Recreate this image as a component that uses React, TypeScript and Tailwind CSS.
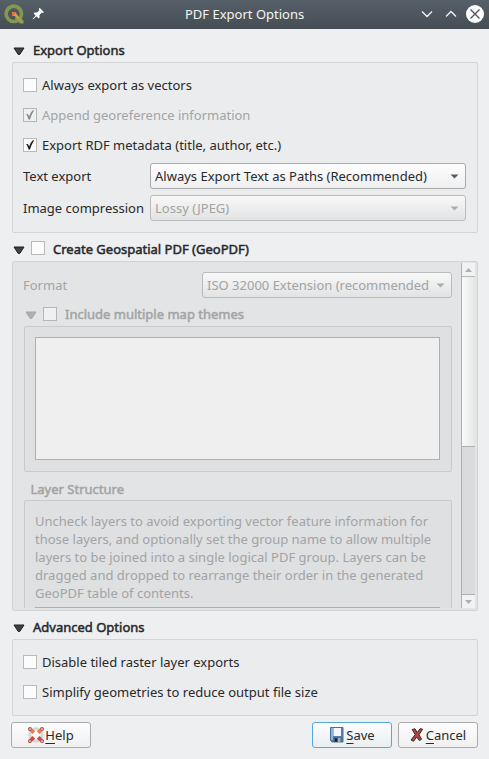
import type { ReactNode } from "react";

function Arrow({ muted }: { muted?: boolean }) {
  return (
    <svg width="12" height="9" viewBox="0 0 12 9" className="shrink-0">
      <path
        d="M1 1h10L6.8 7.4H5.2z"
        fill={muted ? "#aeb0b1" : "#3b4543"}
        stroke={muted ? "#a5a7a8" : "#1c1f21"}
        strokeWidth="1"
        strokeLinejoin="round"
      />
    </svg>
  );
}

function Box({ checked, muted }: { checked?: boolean; muted?: boolean }) {
  return (
    <span
      className={`block size-[14px] shrink-0 border ${muted ? "border-[#b4b6b7] bg-[#eff0f0]" : "border-[#b7b9bb] bg-[#fcfcfc]"}`}
    >
      {checked && (
        <svg width="12" height="12" viewBox="0 0 12 12">
          <path
            d="M2.2 5 H3.800 L5.200 7.600 C6 5 7.200 2.800 9 1.200 H10.200 C8.200 4 7 7 6 10.600 H4.600 C4 8.400 3.200 6.600 2.200 5z"
            fill={muted ? "#818a85" : "#16191b"}
          />
        </svg>
      )}
    </span>
  );
}

function CheckRow({ children, checked, muted }: { children: ReactNode; checked?: boolean; muted?: boolean }) {
  return (
    <label className={`flex h-[30px] items-center gap-[5px] ${muted ? "text-[#a2a4a5]" : ""}`}>
      <Box checked={checked} muted={muted} />
      <span>{children}</span>
    </label>
  );
}

function Combo({ children, muted, className }: { children: ReactNode; muted?: boolean; className: string }) {
  return (
    <div
      className={`flex h-[26px] items-center rounded-[3px] border pr-[6px] pl-1 ${
        muted
          ? "border-[#b9bbbc] bg-linear-to-b from-[#f8f8f8] to-[#e2e3e4] text-[#a2a4a5]"
          : "border-[#a7a9ab] bg-linear-to-b from-[#fdfdfd] to-[#efefef]"
      } ${className}`}
    >
      <span className="min-w-0 flex-1 overflow-hidden">{children}</span>
      <svg width="9" height="5" viewBox="0 0 9 5" className="ml-[6px] shrink-0">
        <path d="M.5 .5h8L4.5 4.5z" fill={muted ? "#aaadad" : "#4f5f68"} />
      </svg>
    </div>
  );
}

const heading = "[-webkit-text-stroke:0.5px_currentColor]";
const button = "flex h-[26px] w-20 items-center justify-center rounded-[3px] border bg-linear-to-b from-[#fdfdfd]";

function TitleBar() {
  return (
    <header className="flex h-[29px] items-center bg-linear-to-b from-[#566068] to-[#454c54] pb-px pl-1 text-[#f3f5f6]">
      <svg width="20" height="20" viewBox="0 0 20 20">
        <circle cx="9.8" cy="9.8" r="7.7" fill="none" stroke="#84984f" strokeWidth="3.6" />
        <path d="M12 12.500 13.500 11 19.500 16.500v3h-3.500L11 14.500z" fill="#8a9f54" />
        <path d="M8.500 8.500h3.500l1 2.500 3 4.500-5.500-3.500H8.500z" fill="#e9a04b" />
        <path d="M8 8h3.200v3.200H8z" fill="#e3753d" />
      </svg>
      <svg width="14" height="14" viewBox="0 0 14 14" className="ml-2">
        <path d="M7.600 .8 12 5.200 10.800 6 9.800 5.600 7.400 8 7.600 10.400 6.600 11.400 4.400 9.200 1 12.400 .6 12 3.600 8.400 1.600 6.400 2.600 5.400 5 5.600 7.400 3.200 6.800 2z" fill="#fff" />
      </svg>
      <h1 className="ml-[139px] w-[150px]">PDF Export Options</h1>
      <svg width="68" height="20" viewBox="0 0 68 20" className="ml-[85px]">
        <path d="M2 7.5 7 12.5 12 7.5M26 12.5 31 7.5 36 12.5" fill="none" stroke="#f3f5f6" strokeWidth="1.3" />
        <circle cx="55" cy="10" r="9" fill="#fcfcfc" />
        <path d="M50.500 5.500 59.500 14.500M59.500 5.500 50.500 14.500" stroke="#4b535b" strokeWidth="1.3" />
      </svg>
    </header>
  );
}

function GeoScrollbar() {
  return (
    <div className="flex h-[345px] w-[14px] flex-col border-l border-[#adafb0]">
      <div className="flex h-[14px] items-center justify-center border-b border-[#b4b6b7] bg-[#f1f2f2]">
        <svg width="7" height="4" viewBox="0 0 7 4"><path d="M3.5 0 7 4H0z" fill="#adafb0" /></svg>
      </div>
      <div className="h-[170px] border-b border-[#adafb0] bg-linear-to-r from-[#fafafa] to-[#e5e6e7]" />
      <div className="flex-1 bg-[#dadbdd]" />
      <div className="flex h-[14px] items-center justify-center border-t border-[#adafb0] bg-[#f1f2f2]">
        <svg width="7" height="4" viewBox="0 0 7 4"><path d="M0 0h7L3.5 4z" fill="#adafb0" /></svg>
      </div>
    </div>
  );
}

function GeoOptions() {
  return (
    <section className="mr-[11px] ml-3 flex h-[350px] rounded-[2px] border border-[#d0d2d4] bg-[#e3e4e6] pt-px text-[#a2a4a5]">
      <div className="h-[345px] w-[448px] overflow-hidden pl-[11px]">
        <div className="mt-[9px] flex w-[428px] items-center justify-between">
          <span className="-ml-px">Format</span>
          <Combo muted className="w-[250px]">
            <span className="block w-[223px] overflow-hidden whitespace-nowrap">ISO 32000 Extension (recommended)</span>
          </Combo>
        </div>
        <div className="flex h-[28px] items-center pt-[3px] pl-px">
          <span className="pt-[3px]"><Arrow muted /></span>
          <span className="ml-[6px]"><Box muted /></span>
          <span className={`ml-2 ${heading}`}>Include multiple map themes</span>
        </div>
        <div className="h-[146px] w-[428px] rounded-[2px] border border-[#c8cacc] bg-[#dfe0e2] px-[10px] pt-[10px]">
          <div className="h-[123px] w-[405px] border border-[#adafb0] bg-[#efefef]" />
        </div>
        <div className={`flex h-[28px] items-center pt-[6px] pl-[6.5px] ${heading}`}>Layer Structure</div>
        <div className="h-[130px] w-[428px] rounded-[2px] border border-[#c8cacc] bg-[#dfe0e2] px-[10px] pt-[11px]">
          <p className="h-[95px] leading-[18px] whitespace-nowrap">
            Uncheck layers to avoid exporting vector feature information for<br />
            those layers, and optionally set the group name to allow multiple<br />
            layers to be joined into a single logical PDF group. Layers can be<br />
            dragged and dropped to rearrange their order in the generated<br />
            GeoPDF table of contents.
          </p>
          <div className="h-4 w-[405px] border border-[#adafb0] bg-[#efefef]" />
        </div>
      </div>
      <GeoScrollbar />
    </section>
  );
}

export default function App() {
  return (
    <main className="flex h-[759px] w-[489px] flex-col overflow-hidden bg-[#eeeff1] font-['Noto_Sans',sans-serif] text-[13px] leading-[18px] text-[#27292b]">
      <TitleBar />
      <div className="flex h-[33px] items-center gap-2 pt-[9px] pl-[13px]">
        <span className="pt-[2px]"><Arrow /></span>
        <h2 className={heading}>Export Options</h2>
      </div>
      <section className="ml-3 h-[171px] w-[466px] shrink-0 rounded-[2px] border border-[#d2d4d6] bg-[#ebecee] px-[10px] pt-[7px]">
        <CheckRow>Always export as vectors</CheckRow>
        <CheckRow checked muted>Append georeference information</CheckRow>
        <CheckRow checked>Export RDF metadata (title, author, etc.)</CheckRow>
        <div className="mt-[3px] flex w-[443px] flex-col gap-[6px]">
          <div className="flex items-center justify-between">
            <span>Text export</span>
            <Combo className="w-[316px]">Always Export Text as Paths (Recommended)</Combo>
          </div>
          <div className="flex items-center justify-between">
            <span>Image compression</span>
            <Combo muted className="w-[316px]">Lossy (JPEG)</Combo>
          </div>
        </div>
      </section>
      <div className="flex h-[28px] items-center pt-[2px] pl-[13px]">
        <span className="pt-[4px]"><Arrow /></span>
        <span className="ml-[6px]"><Box /></span>
        <h2 className={`ml-2 pt-[2px] ${heading}`}>Create Geospatial PDF (GeoPDF)</h2>
      </div>
      <GeoOptions />
      <div className="flex h-[28px] items-center gap-2 pt-[4px] pl-[13px]">
        <span className="pt-[2px]"><Arrow /></span>
        <h2 className={heading}>Advanced Options</h2>
      </div>
      <section className="mx-3 h-[77px] w-[466px] shrink-0 rounded-[2px] border border-[#d2d4d6] bg-[#ebecee] px-[10px] pt-[7px]">
        <CheckRow>Disable tiled raster layer exports</CheckRow>
        <CheckRow>Simplify geometries to reduce output file size</CheckRow>
      </section>
      <footer className="mt-[6px] flex gap-[6px] pr-[11px] pl-[11px]">
        <button className={`${button} mr-auto border-[#a9abad] to-[#f0f0f0]`}>
          <svg width="16" height="16" viewBox="0 0 16 16">
            <circle cx="8" cy="8" r="6.2" fill="none" stroke="#d5d7d8" strokeWidth="3" />
            <g fill="none" stroke="#b9413b" strokeWidth="1.1">
              <circle cx="2" cy="2" r="1.400" /><circle cx="14" cy="2" r="1.400" />
              <circle cx="2" cy="14" r="1.400" /><circle cx="14" cy="14" r="1.400" />
            </g>
            <path d="M4.500 1.800 7.200 4.200 4.500 6.900 1.900 4.500zM11.500 1.800 8.800 4.200 11.500 6.900 14.100 4.500z" fill="#e77c53" />
            <path d="M1.900 11.500 4.500 9.100 7.200 11.800 4.500 14.200zM14.100 11.500 11.500 9.100 8.800 11.800 11.500 14.200z" fill="#c94d40" />
          </svg>
          <span className="ml-px"><span className="underline decoration-1 underline-offset-[3px]">H</span>elp</span>
        </button>
        <button className={`${button} border-[#54a9d8] to-[#e9eef1]`}>
          <svg width="15" height="16" viewBox="0 0 15 16">
            <path d="M1.500 .5h12.500v14.500H3l-1.500-1.500z" fill="#4f80b8" stroke="#4a6f9c" />
            <path d="M2 1h2v12H2z" fill="#8fb4d8" />
            <path d="M4.500 1h7.500v8H4.500z" fill="#f5f6f8" />
            <path d="M4.500 10.500h8V15h-8z" fill="#536066" />
            <path d="M6 11.500h2v3H6z" fill="#15191b" />
            <path d="M9 11h2.500v4H9z" fill="#a8b0b3" />
          </svg>
          <span className="ml-[2px]"><span className="underline decoration-1 underline-offset-[3px]">S</span>ave</span>
        </button>
        <button className={`${button} border-[#a9abad] to-[#f0f0f0]`}>
          <svg width="14" height="16" viewBox="0 0 14 16">
            <path d="M2.200 2.500 5 1.800 7.200 5.600 10.200 1.600 12.600 2.200 9 7.800 11.600 12.200 9.400 13.600 6.700 10 3.500 14.200 1 13 5.200 7.600z" fill="#b44441" stroke="#3e2927" strokeWidth="1" strokeLinejoin="round" />
          </svg>
          <span className="ml-[2px]"><span className="underline decoration-1 underline-offset-[3px]">C</span>ancel</span>
        </button>
      </footer>
    </main>
  );
}
